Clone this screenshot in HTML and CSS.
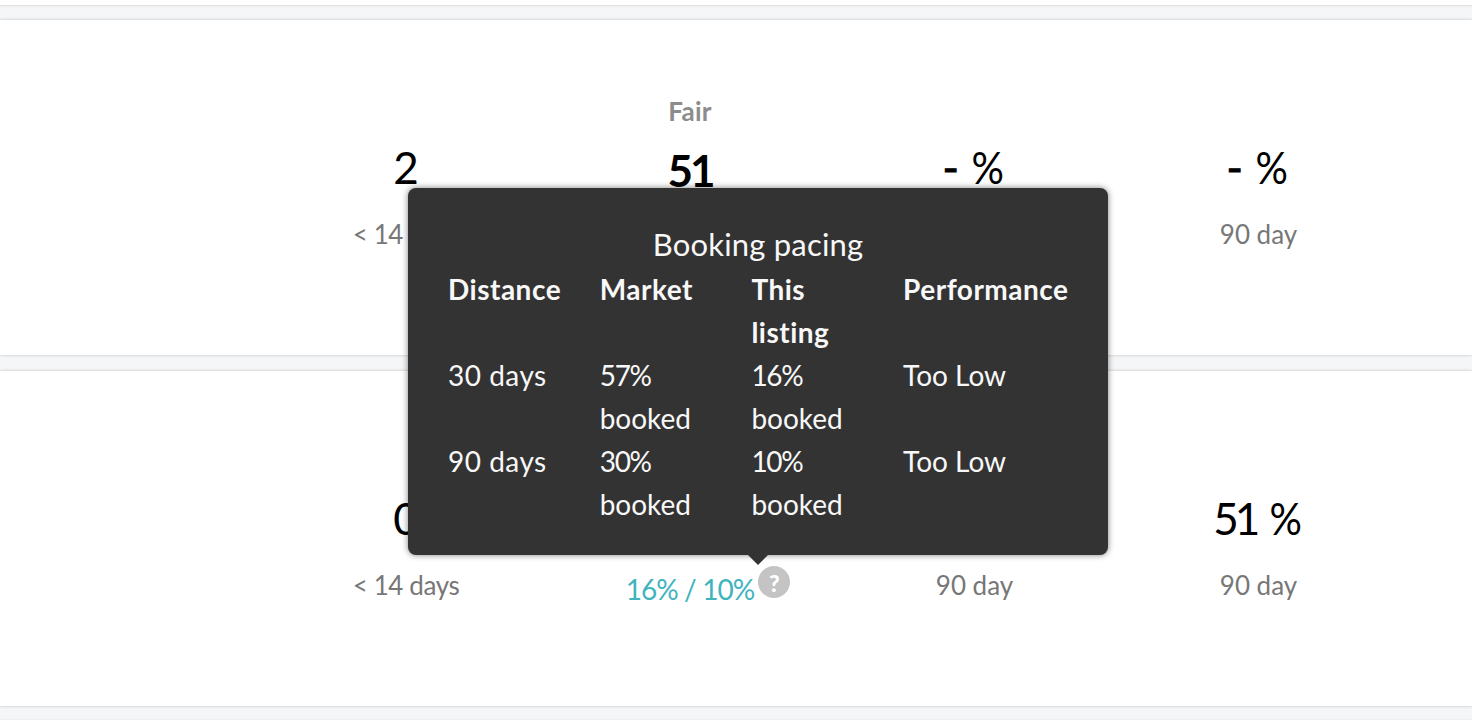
FILE: index.html
```html
<!DOCTYPE html>
<html lang="en">
<head>
    <meta charset="UTF-8">
    <meta name="viewport" content="width=device-width, initial-scale=1.0">
    <title>Listings</title>
    <link rel="stylesheet" href="styles.css">
</head>
<body>
    <div class="listings">
        <div class="listing listing-end"></div>

        <div class="listing">
            <div class="stat">
                <div class="status"></div>
                <div class="value">2</div>
                <div class="caption caption-days">&lt; 14 days</div>
            </div>
            <div class="stat">
                <div class="status">Fair</div>
                <div class="value value-score">51</div>
            </div>
            <div class="stat">
                <div class="status"></div>
                <div class="value"><span class="dash">-</span> <span class="percent">%</span></div>
                <div class="caption">90 day</div>
            </div>
            <div class="stat">
                <div class="status"></div>
                <div class="value"><span class="dash">-</span> <span class="percent">%</span></div>
                <div class="caption">90 day</div>
            </div>
        </div>

        <div class="listing">
            <div class="stat">
                <div class="status"></div>
                <div class="value">0</div>
                <div class="caption caption-days">&lt; 14 days</div>
            </div>
            <div class="stat">
                <div class="status"></div>
                <div class="value"></div>
                <div class="pacing">
                    <span class="pacing-text">16% / 10%</span>
                    <span class="help">?</span>
                </div>
            </div>
            <div class="stat">
                <div class="status"></div>
                <div class="value"></div>
                <div class="caption">90 day</div>
            </div>
            <div class="stat">
                <div class="status"></div>
                <div class="value"><span class="number">51</span> <span class="percent">%</span></div>
                <div class="caption">90 day</div>
            </div>
        </div>

        <div class="listing listing-end"></div>
    </div>

    <!-- Booking pacing tooltip, sits above the help icon -->
    <div class="tooltip">
        <div class="tooltip-title">Booking pacing</div>
        <div class="tooltip-table">
            <div class="head">Distance</div>
            <div class="head">Market</div>
            <div class="head">This listing</div>
            <div class="head">Performance</div>

            <div class="distance">30 days</div>
            <div><span class="rate">57%</span> booked</div>
            <div><span class="rate">16%</span> booked</div>
            <div>Too Low</div>

            <div class="distance">90 days</div>
            <div><span class="rate">30%</span> booked</div>
            <div><span class="rate">10%</span> booked</div>
            <div>Too Low</div>
        </div>
    </div>
</body>
</html>
```

FILE: styles.css
```css
* {
    box-sizing: border-box;
}

body {
    margin: 0;
    height: 720px;
    overflow: hidden;
    position: relative;
    background: #f4f6f8;
    font-family: Lato, "Open Sans", sans-serif;
    font-variant-ligatures: none;
    color: #000;
}

.listings {
    display: flex;
    flex-direction: column;
    gap: 15.5px;
    height: 720px;
    overflow: hidden;
}

/* White card with one row of stats */
.listing {
    display: grid;
    grid-template-columns: repeat(4, 284px);
    flex: none;
    height: 335px;
    padding: 70px 0 0 264px;
    background: #fff;
    box-shadow: 0 0 3px rgba(0, 0, 0, 0.22);
}

.listing-end {
    height: 4.5px;
    padding: 0;
}

.stat {
    display: flex;
    flex-direction: column;
    align-items: center;
}

.status {
    height: 43px;
    line-height: 43px;
    font-size: 26px;
    font-weight: bold;
    letter-spacing: 0.3px;
    color: #8c8c8c;
}

.value {
    height: 70px;
    line-height: 69px;
    font-size: 44px;
    white-space: pre;
}

.value-score {
    font-weight: bold;
    line-height: 74px;
    letter-spacing: -3px;
}

.number {
    letter-spacing: -4px;
}

.dash {
    -webkit-text-stroke: 1px #000;
}

.percent {
    display: inline-block;
    transform: scaleX(0.92);
}

.caption {
    margin-top: 10px;
    padding-left: 1px;
    line-height: 43px;
    font-size: 26px;
    color: #777;
}

.caption-days {
    padding-left: 0;
    letter-spacing: -0.4px;
}

.pacing {
    display: flex;
    align-items: flex-start;
    gap: 4px;
    margin: 12px 0 0 36px;
    white-space: nowrap;
}

.pacing-text {
    padding-top: 2px;
    line-height: 43px;
    font-size: 28px;
    letter-spacing: -0.9px;
    color: #3fb4be;
}

.help {
    width: 32px;
    height: 32px;
    border-radius: 50%;
    background: #c4c4c4;
    color: #fff;
    font-size: 23px;
    font-weight: 900;
    line-height: 35px;
    text-align: center;
}

.tooltip {
    position: absolute;
    top: 188px;
    left: 408px;
    width: 700px;
    height: 367px;
    padding: 34px 40px 0;
    border-radius: 8px;
    background: #333;
    color: #f8f8f8;
    box-shadow: 0 0 6px rgba(0, 0, 0, 0.5);
    font-size: 28px;
    line-height: 43.1px;
}

/* Arrow under the box */
.tooltip::after {
    content: "";
    position: absolute;
    top: 100%;
    left: 340px;
    border: 10px solid transparent;
    border-top-color: #333;
    border-bottom: 0;
}

.tooltip-title {
    height: 45.5px;
    line-height: 45px;
    font-size: 31px;
    letter-spacing: 0.2px;
    text-align: center;
}

.tooltip-table {
    display: grid;
    grid-template-columns: repeat(3, 151.7px) 170px;
}

.tooltip-table > div {
    padding-right: 36px;
}

.tooltip-table > div:nth-child(4n) {
    padding-right: 0;
}

.tooltip-table > .head {
    padding-right: 30px;
    font-weight: bold;
    letter-spacing: 0.5px;
}

.distance {
    letter-spacing: 0.5px;
}

.rate {
    letter-spacing: -1.3px;
}
```
